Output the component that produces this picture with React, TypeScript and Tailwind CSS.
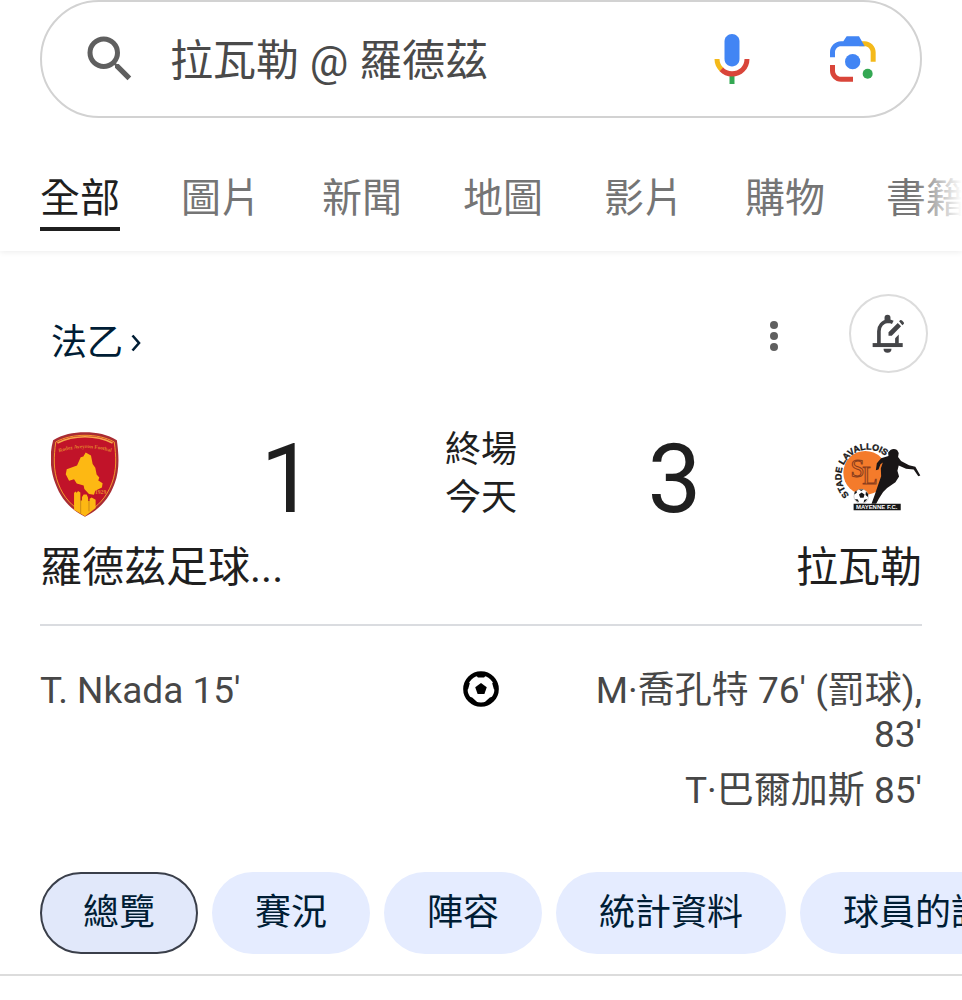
import { useState } from 'react'

const TABS = ['全部', '圖片', '新聞', '地圖', '影片', '購物', '書籍']
const SECTIONS = ['總覽', '賽況', '陣容', '統計資料', '球員的說明']

function SearchIcon() {
    return (
        <svg viewBox="0 0 24 24" className="size-[60px] shrink-0" fill="#5f5f5f" aria-hidden="true">
            <path d="M15.5 14h-.79l-.28-.27A6.471 6.471 0 0 0 16 9.5 6.5 6.5 0 1 0 9.5 16c1.61 0 3.09-.59 4.23-1.57l.27.28v.79l5 4.99L20.49 19l-4.99-5zm-6 0C7.01 14 5 11.99 5 9.5S7.01 5 9.5 5 14 7.01 14 9.5 11.99 14 9.5 14z" />
        </svg>
    )
}

function MicIcon() {
    return (
        <svg viewBox="0 0 24 24" className="size-[60px]" aria-hidden="true">
            <path fill="#4285f4" d="M12 15c1.66 0 3-1.31 3-2.97V4.98C15 3.34 13.66 2 12 2S9 3.34 9 4.98v7.05C9 13.69 10.34 15 12 15z" />
            <path fill="#34a853" d="M11 18.08h2V22h-2z" />
            <path fill="#f4b91a" d="M7.05 16.87C5.78 15.54 5 14.04 5 12h2c0 1.45.56 2.42 1.47 3.38v.32l-1.15 1.18z" />
            <path fill="#d9453a" d="M12 16.93a4.97 4.97 0 0 1-3.54-1.55l-1.41 1.49C8.31 18.21 10.07 19 12 19c3.87 0 6.99-2.92 6.99-7H17c0 2.92-2.24 4.93-5 4.93z" />
        </svg>
    )
}

function LensIcon() {
    return (
        <svg viewBox="0 0 138 136" className="size-[46px]" aria-hidden="true">
            <path fill="#f4b91a" d="M88 15h16c18 0 33 15 33 33v28h-15V48c0-10-8-18-18-18H88z" />
            <path fill="#4285f4" d="M0 63V48c0-18 15-33 33-33h7L50 0h37l17 30H33c-10 0-18 8-18 18v15z" />
            <path fill="#d9453a" d="M0 86v17c0 18 15 33 33 33h36v-15H33c-10 0-18-8-18-18V86z" />
            <circle cx="68" cy="76" r="23" fill="#4285f4" />
            <circle cx="113" cy="112" r="15" fill="#34a853" />
        </svg>
    )
}

function BellEditIcon() {
    return (
        <svg viewBox="0 0 98 118" className="h-[39px] w-[33px]" fill="#444548" aria-hidden="true">
            <path d="M1 88h91v12H1z" />
            <path d="M20 92V52c0-16 11-29 27-30 6 0 11 1 15 3" fill="none" stroke="#444548" strokeWidth="11" />
            <path d="M37 18V11a9 9 0 0 1 18 0v7z" />
            <path d="M69 73l11-11v28H69z" />
            <path d="M34 105h24a12 12 0 0 1-24 0z" />
            <path d="M49 66V55l28-28 10 10-28 29z" />
            <path d="M81 22l3-3q3-2 6 1l5 5q2 3 0 5l-4 4z" />
        </svg>
    )
}

function RodezCrest() {
    return (
        <svg viewBox="64 63 204 256" className="h-[85px] w-[68px]" role="img" aria-label="羅德茲足球會">
            <defs>
                <path id="rodez-arc" d="M88 124Q166 99 247 124" />
            </defs>
            <path fill="#a92c33" d="M166 64c36 0 68 7 96 24 6 43 9 91-7 131-17 47-47 78-89 99-42-21-72-52-89-99-16-40-19-88-7-131 28-17 60-24 96-24z" />
            <path fill="#c11329" stroke="#f59a2d" strokeWidth="3" d="M166 73c32 0 62 6 88 20 6 43 8 85-7 124-16 43-42 71-81 92-39-21-65-49-81-92-15-39-13-81-7-124 26-14 56-20 88-20z" />
            <path fill="none" stroke="#f6a84b" strokeWidth="5" d="M83 96c50-25 116-25 166 0" />
            <path fill="#fdb813" d="M168 125l16 9 5 25 8 12 4 20 8 9-3 9 13 8-2 13-20 10-4 12-15-2-14-15-2-11-21-6-8-13-15 5-10-20 3-15 31-11 11-25 8-2z" />
            <path fill="#fdb813" d="M133 297v-50l4-5 4 4 4-5 7 4v24h5v-10l5-8h9l4 9v11h5v-7l6-4 12 7v25l-32 25z" />
            <path d="M153 258v51M178 264v38" stroke="#b0701c" strokeWidth="2" />
            <text fontFamily="'Liberation Serif', serif" fontSize="16" fontWeight="700" fill="#e2802c">
                <textPath href="#rodez-arc">Rodez Aveyron Football</textPath>
            </text>
            <text x="196" y="250" fontFamily="'Liberation Serif', serif" fontSize="17" fontWeight="700" fill="#e68c2b">
                1929
            </text>
        </svg>
    )
}

function LavalCrest() {
    return (
        <svg viewBox="38 46 262 220" className="h-[73px] w-[87px]" role="img" aria-label="拉瓦勒">
            <defs>
                <path id="laval-arc" d="M84 218A78 78 0 1 1 196 104" />
            </defs>
            <circle cx="132" cy="151" r="66" fill="#f47b2b" />
            <text fontFamily="'Liberation Sans', sans-serif" fontSize="27" fontWeight="700" fill="#161616" stroke="#161616" strokeWidth="1">
                <textPath href="#laval-arc">STADE LAVALLOIS</textPath>
            </text>
            <g fontFamily="'Liberation Serif', serif" fontSize="76" fill="#ef762b" stroke="#8a3e1d" strokeWidth="3">
                <text x="88" y="163">S</text>
                <text x="123" y="185">L</text>
            </g>
            <circle cx="120" cy="222" r="22" fill="#fff" stroke="#777" strokeWidth="1" />
            <path d="M113 216l8-6 9 6-3 10h-10zM99 216l8-5-2-7q-7 5-6 12zM113 201h14l-7 5zM134 207l7 8-1 9-7-6zM101 230l9 1 3 9q-8-2-12-10zM129 232l9-2q-4 9-11 11z" fill="#181818" />
            <path d="M208 82q10-6 20 0l5 9-2 12 9 12 24 13 19 5 15 26-6 2-14-20-23-2-22-10-4 16 5 17-11 17-25 18-12 12-13 20-8 15h-14l9-25 10-29 10-29-1-23 6-18-7 5-6 16-8 2 3-21 13-15 22-7-1-10z" fill="#191617" />
            <path d="M97 244h142v20H97z" fill="#171717" />
            <text x="104" y="260" fontFamily="'Liberation Sans', sans-serif" fontSize="18" fontWeight="700" fill="#fff">
                MAYENNE F.C.
            </text>
        </svg>
    )
}

function BallIcon() {
    return (
        <svg viewBox="0 0 106 106" className="size-9" role="img" aria-label="入球">
            <circle cx="53" cy="53" r="46" fill="#fff" stroke="#000" strokeWidth="13" />
            <path d="M53 35l17 13-7 20H43l-7-20z" />
            <path d="M40 6h26v9l-4 4H44l-4-4zM5 35l9-5 6 6-5 18-10 4zM101 35l-9-5-6 6 5 18 10 4zM15 85l5-9 7 2 13 12-2 9zM91 85l-5-9-7 2-13 12 2 9z" />
        </svg>
    )
}

function Header() {
    const [query, setQuery] = useState('拉瓦勒 @ 羅德茲')

    return (
        <header className="shadow-[0_1px_6px_rgba(0,0,0,0.08)]">
            <form role="search" className="px-10" onSubmit={(e) => e.preventDefault()}>
                <div className="flex h-[118px] items-center rounded-full border-2 border-[#d2d2d2] pr-9 pl-[38px]">
                    <SearchIcon />
                    <input
                        type="text"
                        aria-label="搜尋"
                        value={query}
                        onChange={(e) => setQuery(e.target.value)}
                        className="ml-[30px] min-w-0 flex-1 bg-transparent pt-1 text-[43px] leading-[60px] text-[#4a4a4a] outline-none"
                    />
                    <button type="button" aria-label="語音搜尋" className="mr-[68px]">
                        <MicIcon />
                    </button>
                    <button type="button" aria-label="以圖搜尋" className="mr-2">
                        <LensIcon />
                    </button>
                </div>
            </form>

            {/* Tabs run off the right edge and fade out there */}
            <div className="relative mt-[53px]">
                <nav className="flex gap-[61px] overflow-hidden pl-10 text-[40px] leading-[56px] whitespace-nowrap">
                    {TABS.map((tab, i) => (
                        <a
                            key={tab}
                            href="#"
                            className={
                                i === 0
                                    ? 'shrink-0 border-b-4 border-[#1f1f1f] text-[#1f1f1f]'
                                    : 'shrink-0 border-b-4 border-transparent text-[#757575]'
                            }
                        >
                            {tab}
                        </a>
                    ))}
                </nav>
                <div className="pointer-events-none absolute inset-y-0 right-0 w-12 bg-linear-to-l from-white to-white/0" />
            </div>
            <div className="h-5" />
        </header>
    )
}

function ScoreBoard() {
    return (
        <section className="px-10 text-[#1f1f1f]">
            <div className="flex items-start">
                <div className="flex h-[100px] w-[90px] items-center justify-center">
                    <RodezCrest />
                </div>
                <div className="flex-1 text-center text-[96px] leading-[110px]">1</div>
                <div className="pt-0.5 text-center text-4xl leading-[48px]">
                    <p>終場</p>
                    <p>今天</p>
                </div>
                <div className="flex-1 text-center text-[96px] leading-[110px]">3</div>
                <div className="flex h-[100px] w-[90px] items-center justify-center">
                    <LavalCrest />
                </div>
            </div>
            <div className="flex justify-between text-[42px] leading-[68px]">
                <h2>羅德茲足球...</h2>
                <h2>拉瓦勒</h2>
            </div>
        </section>
    )
}

function Goals() {
    return (
        <section className="mx-10 mt-[22px] grid grid-cols-[1fr_auto_1fr] border-t-2 border-[#dadce0] pt-[43px] text-[37px] leading-[44px] text-[#474747]">
            <p>T. Nkada 15'</p>
            <div className="flex h-10 items-center">
                <BallIcon />
            </div>
            <div className="flex flex-col items-end gap-3 text-right">
                <p className="max-w-[340px]">M·喬孔特 76' (罰球), 83'</p>
                <p>T·巴爾加斯 85'</p>
            </div>
        </section>
    )
}

export default function App() {
    const [section, setSection] = useState(SECTIONS[0])

    return (
        <div
            lang="zh-Hant"
            className="min-h-screen overflow-x-hidden bg-white font-[Roboto,'Noto_Sans_CJK_TC',sans-serif]"
        >
            <Header />

            <main>
                <div className="flex items-end pt-[43px] pr-[34px] pb-[51px] pl-[51px]">
                    <a href="#" className="flex items-center gap-2 text-4xl leading-[60px] text-[#001d35]">
                        法乙
                        <svg viewBox="0 0 10 18" className="h-[18px] w-[10px]" fill="none" stroke="currentColor" strokeWidth="2.6" aria-hidden="true">
                            <path d="M1.5 1.5L8 9l-6.5 7.5" />
                        </svg>
                    </a>
                    <button type="button" aria-label="更多選項" className="mr-[57px] ml-auto flex h-[74px] w-9 items-center justify-center">
                        <svg viewBox="0 0 8 30" className="h-[30px] w-2" fill="#5f5f5f" aria-hidden="true">
                            <circle cx="4" cy="4" r="4" />
                            <circle cx="4" cy="15" r="4" />
                            <circle cx="4" cy="26" r="4" />
                        </svg>
                    </button>
                    <button
                        type="button"
                        aria-label="通知設定"
                        className="flex size-[79px] items-center justify-center rounded-full border-2 border-[#dcdcdc]"
                    >
                        <BellEditIcon />
                    </button>
                </div>

                <ScoreBoard />
                <Goals />

                <div className="mt-[59px] flex gap-[14px] overflow-hidden border-b-2 border-[#dcdcdc] pb-5 pl-10">
                    {SECTIONS.map((name) => (
                        <button
                            key={name}
                            type="button"
                            onClick={() => setSection(name)}
                            className={
                                name === section
                                    ? 'h-[82px] shrink-0 rounded-full border-2 border-[#3a3f4a] bg-[#e1e8fa] px-[41px] text-4xl text-[#001d35]'
                                    : 'h-[82px] shrink-0 rounded-full border-2 border-transparent bg-[#e5ecff] px-[41px] text-4xl text-[#001d35]'
                            }
                        >
                            {name}
                        </button>
                    ))}
                </div>
            </main>
        </div>
    )
}
